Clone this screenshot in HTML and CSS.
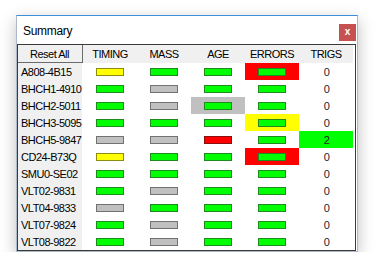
FILE: index.html
```html
<!DOCTYPE html>
<html>
<head>
<meta charset="utf-8">
<link rel="stylesheet" href="styles.css">
</head>
<body>
<div class="page">
  <div class="window">
    <div class="titlebar">
      <span class="title">Summary</span>
      <span class="close">x</span>
    </div>
    <div class="grid">
      <div class="hdr reset">Reset All</div>
      <div class="hdr">TIMING</div>
      <div class="hdr">MASS</div>
      <div class="hdr">AGE</div>
      <div class="hdr">ERRORS</div>
      <div class="hdr">TRIGS</div>

      <div class="name">A808-4B15</div>
      <div class="cell"><span class="bar yellow"></span></div>
      <div class="cell"><span class="bar green"></span></div>
      <div class="cell"><span class="bar green"></span></div>
      <div class="cell bg-red"><span class="bar green"></span></div>
      <div class="cell num">0</div>

      <div class="name">BHCH1-4910</div>
      <div class="cell"><span class="bar green"></span></div>
      <div class="cell"><span class="bar gray"></span></div>
      <div class="cell"><span class="bar green"></span></div>
      <div class="cell"><span class="bar green"></span></div>
      <div class="cell num">0</div>

      <div class="name">BHCH2-5011</div>
      <div class="cell"><span class="bar green"></span></div>
      <div class="cell"><span class="bar gray"></span></div>
      <div class="cell bg-gray"><span class="bar green"></span></div>
      <div class="cell"><span class="bar green"></span></div>
      <div class="cell num">0</div>

      <div class="name">BHCH3-5095</div>
      <div class="cell"><span class="bar green"></span></div>
      <div class="cell"><span class="bar green"></span></div>
      <div class="cell"><span class="bar green"></span></div>
      <div class="cell bg-yellow"><span class="bar green"></span></div>
      <div class="cell num">0</div>

      <div class="name">BHCH5-9847</div>
      <div class="cell"><span class="bar gray"></span></div>
      <div class="cell"><span class="bar gray"></span></div>
      <div class="cell"><span class="bar red"></span></div>
      <div class="cell"><span class="bar green"></span></div>
      <div class="cell num bg-green">2</div>

      <div class="name">CD24-B73Q</div>
      <div class="cell"><span class="bar yellow"></span></div>
      <div class="cell"><span class="bar green"></span></div>
      <div class="cell"><span class="bar green"></span></div>
      <div class="cell bg-red"><span class="bar green"></span></div>
      <div class="cell num">0</div>

      <div class="name">SMU0-SE02</div>
      <div class="cell"><span class="bar green"></span></div>
      <div class="cell"><span class="bar green"></span></div>
      <div class="cell"><span class="bar green"></span></div>
      <div class="cell"><span class="bar green"></span></div>
      <div class="cell num">0</div>

      <div class="name">VLT02-9831</div>
      <div class="cell"><span class="bar green"></span></div>
      <div class="cell"><span class="bar gray"></span></div>
      <div class="cell"><span class="bar green"></span></div>
      <div class="cell"><span class="bar green"></span></div>
      <div class="cell num">0</div>

      <div class="name">VLT04-9833</div>
      <div class="cell"><span class="bar gray"></span></div>
      <div class="cell"><span class="bar green"></span></div>
      <div class="cell"><span class="bar green"></span></div>
      <div class="cell"><span class="bar green"></span></div>
      <div class="cell num">0</div>

      <div class="name">VLT07-9824</div>
      <div class="cell"><span class="bar green"></span></div>
      <div class="cell"><span class="bar gray"></span></div>
      <div class="cell"><span class="bar green"></span></div>
      <div class="cell"><span class="bar green"></span></div>
      <div class="cell num">0</div>

      <div class="name">VLT08-9822</div>
      <div class="cell"><span class="bar green"></span></div>
      <div class="cell"><span class="bar gray"></span></div>
      <div class="cell"><span class="bar green"></span></div>
      <div class="cell"><span class="bar green"></span></div>
      <div class="cell num">0</div>
    </div>
  </div>
</div>
</body>
</html>
```
FILE: styles.css
```css
html, body {
  margin: 0;
  background: #ffffff;
  font-family: "Liberation Sans", Arial, sans-serif;
}

.page {
  padding: 15px 0 0 16px;
}

.window {
  width: 340px;
  background: #ffffff;
  border: 1px solid #aab8c8;
  border-top-color: #3d8fdc;
  box-shadow: 0 5px 15px rgba(0, 0, 0, 0.25);
}

.titlebar {
  height: 28px;
  display: flex;
  align-items: center;
  justify-content: space-between;
  padding-left: 6px;
}

.title {
  font-size: 12px;
  letter-spacing: -0.3px;
  color: #000;
  margin-top: 1px;
}

.close {
  width: 17px;
  height: 17px;
  margin-top: 4px;
  margin-right: 1px;
  background: #c75050;
  color: #fff;
  font-weight: bold;
  font-size: 10px;
  line-height: 16px;
  text-align: center;
}

.grid {
  display: grid;
  grid-template-columns: 65px repeat(5, 54px);
  grid-template-rows: 18px;
  grid-auto-rows: 17px;
  width: 337px;
  border: 1px solid #3a3a3a;
  background: #fff;
  font-size: 11px;
  letter-spacing: -0.5px;
  color: #000;
}

.hdr {
  background: #f0f0f0;
  display: flex;
  align-items: center;
  justify-content: center;
}

.reset {
  box-sizing: border-box;
  border-right: 1px solid #6b6b6b;
  border-bottom: 1px solid #6b6b6b;
  padding-right: 1px;
}

.name {
  background: #f0f0f0;
  box-shadow: inset -1px 0 #fff;
  display: flex;
  align-items: center;
  padding-left: 3px;
}

.cell {
  display: flex;
  align-items: center;
  justify-content: center;
}

.num {
  color: #1e1e2a;
  padding-left: 1px;
}

.bg-red { background: #ff0000; }
.bg-yellow { background: #ffff00; }
.bg-gray { background: #c0c0c0; }
.bg-green { background: #00ff00; }

.bar {
  box-sizing: border-box;
  width: 28px;
  height: 8px;
  border: 1px solid;
}

.bar.green { background: #00ff00; border-color: #1f8a1f; }
.bar.yellow { background: #ffff00; border-color: #8c8c10; }
.bar.gray { background: #c0c0c0; border-color: #727272; }
.bar.red { background: #ff0000; border-color: #8a1010; }
```
